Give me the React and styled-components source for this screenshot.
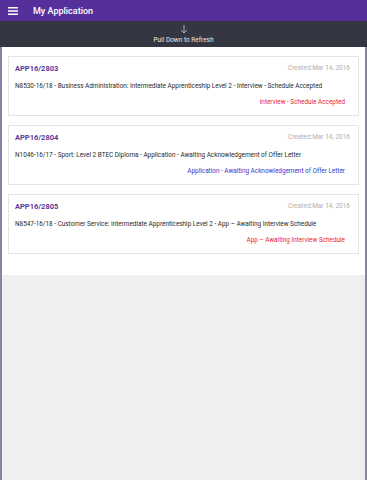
import React from "react";
import styled, { createGlobalStyle } from "styled-components";

const GlobalStyle = createGlobalStyle`
  html, body {
    margin: 0;
    padding: 0;
    background: #efefef;
    font-family: Roboto, "Liberation Sans", sans-serif;
  }
`;

const Page = styled.div`
  width: 367px;
  height: 480px;
  display: flex;
  flex-direction: column;
  background: #efefef;
  border-left: 2px solid #8c80aa;
  border-right: 2px solid #8c80aa;
  box-sizing: border-box;
`;

const TopBar = styled.div`
  height: 21px;
  background: #55309b;
  display: flex;
  align-items: center;
  padding-left: 8px;
  gap: 15px;
  margin: 0 -2px;
`;

const Title = styled.div`
  color: #fff;
  font-size: 9px;
  font-weight: 500;
`;

const RefreshBar = styled.div`
  height: 26px;
  background: #343741;
  display: flex;
  flex-direction: column;
  align-items: center;
  justify-content: flex-end;
  padding-bottom: 3px;
  box-sizing: border-box;
  margin: 0 -2px;
  color: #e6e6e6;
  font-size: 6.5px;
`;

const List = styled.div`
  background: #fff;
  padding: 9px 6px 21px;
  display: flex;
  flex-direction: column;
  gap: 9px;
`;

const Card = styled.div`
  border: 1px solid #e4e4e4;
  padding: 5px 8px 8px 6px;
  display: flex;
  flex-direction: column;
`;

const CardHead = styled.div`
  display: flex;
  justify-content: space-between;
  align-items: center;
  height: 12px;
`;

const AppId = styled.div`
  color: #5a3a9c;
  font-weight: 700;
  font-size: 7.5px;
`;

const Created = styled.div`
  color: #b0b0b0;
  font-size: 6.5px;
`;

const Desc = styled.div`
  margin-top: 7px;
  height: 10px;
  line-height: 10px;
  color: #2a2a2a;
  font-size: 6.4px;
  white-space: nowrap;
`;

const Status = styled.div`
  margin-top: 6px;
  height: 10px;
  line-height: 10px;
  padding-right: 5px;
  text-align: right;
  font-size: 6.4px;
  color: ${(p) => p.color};
`;

const apps = [
  {
    id: "APP16/2803",
    desc: "N8530-16/18 - Business Administration: Intermediate Apprenticeship Level 2 - Interview - Schedule Accepted",
    status: "Interview - Schedule Accepted",
    color: "#e8243c",
  },
  {
    id: "APP16/2804",
    desc: "N1046-16/17 - Sport: Level 2 BTEC Diploma - Application - Awaiting Acknowledgement of Offer Letter",
    status: "Application - Awaiting Acknowledgement of Offer Letter",
    color: "#3a36c8",
  },
  {
    id: "APP16/2805",
    desc: "N8547-16/18 - Customer Service: Intermediate Apprenticeship Level 2 - App \u2013 Awaiting Interview Schedule",
    status: "App \u2013 Awaiting Interview Schedule",
    color: "#e8243c",
  },
];

const App = () => {
  return (
    <Page>
      <GlobalStyle />
      <TopBar>
        <svg width="10" height="8" viewBox="0 0 10 8">
          <rect x="0" y="0" width="10" height="1.5" fill="#fff" />
          <rect x="0" y="3.25" width="10" height="1.5" fill="#fff" />
          <rect x="0" y="6.5" width="10" height="1.5" fill="#fff" />
        </svg>
        <Title>My Application</Title>
      </TopBar>
      <RefreshBar>
        <svg width="8" height="9" viewBox="0 0 8 9" style={{ marginBottom: 2 }}>
          <path d="M4 0 V8 M1 5 L4 8 L7 5" stroke="#ccc" strokeWidth="0.8" fill="none" />
        </svg>
        <div>Pull Down to Refresh</div>
      </RefreshBar>
      <List>
        {apps.map((a) => (
          <Card key={a.id}>
            <CardHead>
              <AppId>{a.id}</AppId>
              <Created>Created:Mar 14, 2016</Created>
            </CardHead>
            <Desc>{a.desc}</Desc>
            <Status color={a.color}>{a.status}</Status>
          </Card>
        ))}
      </List>
    </Page>
  );
};

export default App;
